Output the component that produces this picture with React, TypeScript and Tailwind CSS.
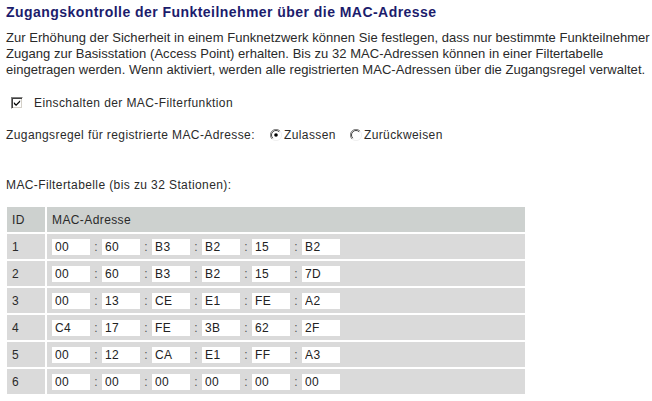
import { useState } from "react";

const MACS: string[][] = [
  ["00", "60", "B3", "B2", "15", "B2"],
  ["00", "60", "B3", "B2", "15", "7D"],
  ["00", "13", "CE", "E1", "FE", "A2"],
  ["C4", "17", "FE", "3B", "62", "2F"],
  ["00", "12", "CA", "E1", "FF", "A3"],
  ["00", "00", "00", "00", "00", "00"],
];

function ClassicCheckbox({ checked }: { checked: boolean }) {
  return (
    <span className="inline-flex h-[12px] w-[12px] items-center justify-center border border-t-[#808080] border-l-[#808080] border-r-white border-b-white bg-white shadow-[inset_1px_1px_0_#404040,inset_-1px_-1px_0_#d4d0c8]">
      {checked && (
        <svg width="8" height="8" viewBox="0 0 9 9">
          <path d="M1 3.5 L3.5 6 L8 1.5 L8 3.5 L3.5 8 L1 5.5 Z" fill="#000" />
        </svg>
      )}
    </span>
  );
}

function ClassicRadio({ checked }: { checked: boolean }) {
  return (
    <svg width="12" height="12" viewBox="0 0 12 12" className="shrink-0">
      <circle cx="6" cy="6" r="5.5" fill="#fff" />
      <path d="M10 2 A5.5 5.5 0 0 0 2 10" fill="none" stroke="#808080" strokeWidth="1" />
      <path d="M9.2 2.8 A4.5 4.5 0 0 0 2.8 9.2" fill="none" stroke="#404040" strokeWidth="1" />
      <path d="M2 10 A5.5 5.5 0 0 0 10 2" fill="none" stroke="#f0f0f0" strokeWidth="1" />
      {checked && <circle cx="6" cy="6" r="1.8" fill="#000" />}
    </svg>
  );
}

export default function App() {
  const [enabled, setEnabled] = useState(true);
  const [rule, setRule] = useState<"allow" | "deny">("allow");

  return (
    <div className="h-[401px] w-[652px] overflow-hidden bg-white pl-[6px] font-['Liberation_Sans',Arial,sans-serif] text-[12px] leading-[16px] tracking-[0.4px] text-[#2a2a2a]">
      <h1 className="pt-[3px] text-[14px] font-bold leading-[18px] tracking-[0.45px] text-[#1c1c6c]">
        Zugangskontrolle der Funkteilnehmer über die MAC-Adresse
      </h1>
      <p className="mt-[9px] whitespace-nowrap text-[13px] tracking-[0.04px]">
        Zur Erhöhung der Sicherheit in einem Funknetzwerk können Sie festlegen, dass nur bestimmte Funkteilnehmer
        <br />
        Zugang zur Basisstation (Access Point) erhalten. Bis zu 32 MAC-Adressen können in einer Filtertabelle
        <br />
        eingetragen werden. Wenn aktiviert, werden alle registrierten MAC-Adressen über die Zugangsregel verwaltet.
      </p>

      <label className="mt-[17px] flex items-center pl-[5px]" onClick={() => setEnabled(!enabled)}>
        <ClassicCheckbox checked={enabled} />
        <span className="ml-[11px]">Einschalten der MAC-Filterfunktion</span>
      </label>

      <div className="mt-[16px] flex items-center">
        <span className="w-[264px]">Zugangsregel für registrierte MAC-Adresse:</span>
        <label className="flex items-center" onClick={() => setRule("allow")}>
          <ClassicRadio checked={rule === "allow"} />
          <span className="ml-[2px]">Zulassen</span>
        </label>
        <label className="ml-[14px] flex items-center" onClick={() => setRule("deny")}>
          <ClassicRadio checked={rule === "deny"} />
          <span className="ml-[2px]">Zurückweisen</span>
        </label>
      </div>

      <div className="mt-[34px]">MAC-Filtertabelle (bis zu 32 Stationen):</div>

      <div className="mt-[14px] ml-[1px] w-[518px]">
        <div className="grid h-[25px] grid-cols-[38px_478px] gap-x-[2px]">
          <div className="flex items-center bg-[#cdd1cf] pl-[5px]">ID</div>
          <div className="flex items-center bg-[#cdd1cf] pl-[5px]">MAC-Adresse</div>
        </div>
        {MACS.map((mac, i) => (
          <div key={i} className="mt-[2px] grid h-[25px] grid-cols-[38px_478px] gap-x-[2px]">
            <div className="flex items-center bg-[#dadada] pl-[5px]">{i + 1}</div>
            <div className="flex items-center bg-[#dadada] pl-[5px]">
              {mac.map((part, j) => (
                <div key={j} className="flex items-center">
                  {j > 0 && <span className="w-[12px] text-center text-[#555]">:</span>}
                  <input
                    defaultValue={part}
                    className="h-[16px] w-[38px] bg-white px-[3px] font-['Liberation_Sans',Arial,sans-serif] text-[12px] tracking-[0.4px] text-[#222] outline-none"
                  />
                </div>
              ))}
            </div>
          </div>
        ))}
      </div>
    </div>
  );
}
